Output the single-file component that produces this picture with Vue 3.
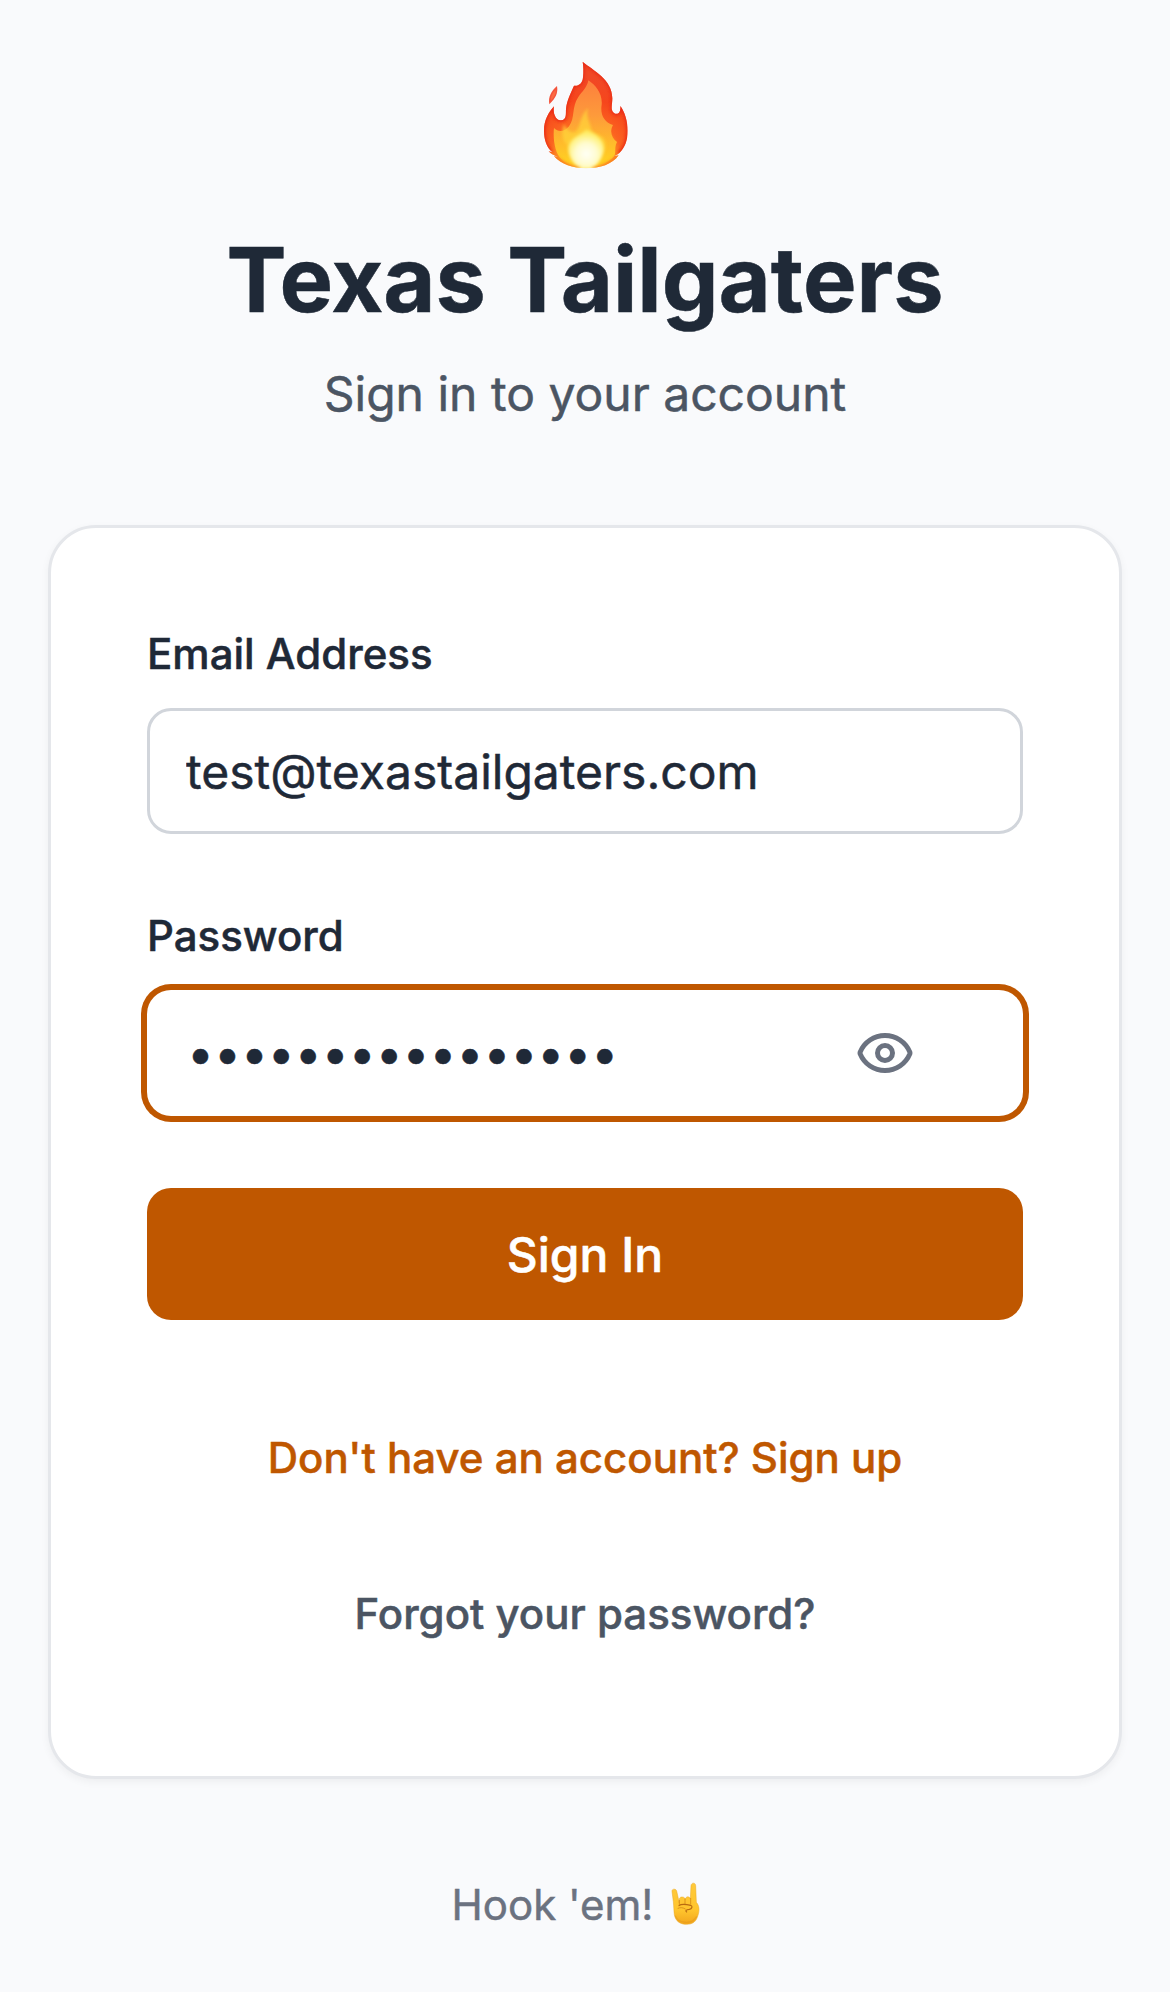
<script setup>
import { ref } from 'vue'

const email = ref('test@texastailgaters.com')
const password = ref('hookemhorns12345')
</script>

<template>
  <main class="page">
    <header class="brand">
      <svg class="flame" viewBox="0 0 360 390" aria-hidden="true">
        <defs>
          <radialGradient id="flameOuter" gradientUnits="userSpaceOnUse" cx="182" cy="320" r="240">
            <stop offset="0" stop-color="#fff06a" />
            <stop offset=".25" stop-color="#ffb829" />
            <stop offset=".45" stop-color="#fb6420" />
            <stop offset=".72" stop-color="#f6461c" />
            <stop offset="1" stop-color="#f04826" />
          </radialGradient>
          <linearGradient id="flameMid" x1="0" y1="0" x2="0" y2="1">
            <stop offset="0" stop-color="#fd7f3d" />
            <stop offset=".4" stop-color="#fd9a3b" />
            <stop offset=".7" stop-color="#ffb92c" />
            <stop offset="1" stop-color="#ffd61f" />
          </linearGradient>
          <radialGradient id="flameCore" gradientUnits="userSpaceOnUse" cx="184" cy="312" r="80">
            <stop offset="0" stop-color="#fffff6" />
            <stop offset=".4" stop-color="#fffcd0" />
            <stop offset=".75" stop-color="#ffef70" />
            <stop offset="1" stop-color="#ffdf3c" />
          </radialGradient>
          <filter id="soften" x="-20%" y="-20%" width="140%" height="140%">
            <feGaussianBlur stdDeviation="4" />
          </filter>
          <clipPath id="flameClip">
            <path d="M173 35C205 62 262 88 262 145C262 163 256 180 266 188C278 197 288 188 286 168C299 185 308 214 308 242C308 272 299 293 283 309C279 313 274 316 268 318L281 316C262 343 225 355 183 355C143 355 109 343 87 319L98 320C88 317 77 311 71 304L82 307C64 291 57 268 57 242C57 211 70 188 87 169C83 188 91 212 108 211C126 210 122 190 123 177C126 150 136 133 147 107C158 110 173 102 174 82C176 65 175 49 173 35Z" />
          </clipPath>
        </defs>
        <path d="M96 108C100 130 91 145 73 163C69 141 78 124 96 108Z" fill="#f4543c" />
        <path d="M92 120C93 132 87 142 78 151C77 139 82 129 92 120Z" fill="#fb6b43" />
        <g clip-path="url(#flameClip)">
          <rect width="360" height="390" fill="url(#flameOuter)" />
          <path d="M173 35C205 62 262 88 262 145C262 163 256 180 266 188C278 197 288 188 286 168C299 185 308 214 308 242C308 272 299 293 281 311M87 169C83 188 91 212 108 211C126 210 122 190 123 177C126 150 136 133 147 107C158 110 173 102 174 82C176 65 175 49 173 35M87 169C70 188 57 211 57 242C57 268 64 291 79 306" fill="none" stroke="#e92b13" stroke-width="9" filter="url(#soften)" />
          <path d="M190 91C213 106 233 132 230 164C225 194 238 218 264 225C252 247 262 264 276 276C264 300 280 313 258 328C227 357 142 362 109 328C91 310 83 270 87 234C99 247 119 247 132 229C151 204 139 171 160 141C172 124 187 111 190 91Z" fill="url(#flameMid)" />
          <path d="M190 174C181 199 196 217 199 239C210 257 227 250 238 268C247 287 240 307 221 332L202 355H164C142 337 126 312 128 286C111 273 108 248 117 222C127 243 143 253 154 243C168 227 163 198 190 174Z" fill="#ffd63b" opacity=".7" filter="url(#soften)" />
          <path d="M184 238C203 250 240 263 236 301C231 330 215 346 202 357H164C147 343 128 321 131 291C136 260 170 256 184 238Z" fill="url(#flameCore)" filter="url(#soften)" />
          <path d="M71 300C98 324 132 346 168 353L151 362H95ZM285 309C258 332 231 347 199 353L215 362H270Z" fill="#fb7d1c" opacity=".8" filter="url(#soften)" />
        </g>
      </svg>
      <h1 class="title">Texas Tailgaters</h1>
      <p class="subtitle">Sign in to your account</p>
    </header>

    <section class="card">
      <form class="form" @submit.prevent>
        <div class="field">
          <label class="label" for="email">Email Address</label>
          <input id="email" v-model="email" class="input" type="text" />
        </div>
        <div class="field">
          <label class="label" for="password">Password</label>
          <div class="password-box">
            <input id="password" v-model="password" class="password-input" type="password" />
            <svg class="eye" viewBox="0 0 24 24" fill="none" stroke="currentColor" stroke-width="2" stroke-linecap="round" stroke-linejoin="round">
              <path d="M2.062 12.348a1 1 0 0 1 0-.696 10.75 10.75 0 0 1 19.876 0 1 1 0 0 1 0 .696 10.75 10.75 0 0 1-19.876 0" />
              <circle cx="12" cy="12" r="3" />
            </svg>
          </div>
        </div>
        <button class="submit" type="submit">Sign In</button>
      </form>
      <nav class="links">
        <a class="link signup">Don't have an account? Sign up</a>
        <a class="link forgot">Forgot your password?</a>
      </nav>
    </section>

    <footer class="footer">
      <span>Hook 'em!</span>
      <svg class="horns" viewBox="0 0 150 180" aria-hidden="true">
        <defs>
          <linearGradient id="skin" x1="0" y1="0" x2="0" y2="1">
            <stop offset="0" stop-color="#ffc93a" />
            <stop offset=".65" stop-color="#ffc52e" />
            <stop offset="1" stop-color="#f2a51c" />
          </linearGradient>
        </defs>
        <path d="M36 49C35 41 48 40 50 48L58 84C57 72 58 66 66 66C72 66 75 69 76 73C77 63 89 63 91 72L93 32C94 22 107 22 107 32L109 82C118 92 119 106 114 121C109 139 99 148 80 148C60 148 47 139 43 119C41 107 42 94 40 80Z" fill="url(#skin)" stroke="#e9a623" stroke-width="1.5" />
        <path d="M58 76V91M75 72V87M92 70V87" fill="none" stroke="#d58a16" stroke-width="2.5" stroke-linecap="round" />
        <path d="M57 92C64 86 83 89 92 91C99 94 96 101 88 103C78 104 75 107 80 111" fill="none" stroke="#b96b11" stroke-width="3.5" stroke-linecap="round" />
        <path d="M54 100C61 96 70 98 76 102" fill="none" stroke="#dd961b" stroke-width="3" stroke-linecap="round" />
        <path d="M46 122C52 143 94 153 110 124" fill="none" stroke="#e2951b" stroke-width="4" opacity=".45" />
      </svg>
    </footer>
  </main>
</template>

<style>
body {
  background: #f9fafc;
}
</style>

<style scoped>
.page {
  box-sizing: border-box;
  min-height: 1992px;
  padding: 50px 48px 0;
  background: #f9fafc;
  color: #1f2937;
  font-family: Inter, "Liberation Sans", sans-serif;
  -webkit-text-stroke: 0.5px currentColor;
}

.brand {
  display: flex;
  flex-direction: column;
  align-items: center;
}

.flame {
  width: 120px;
  height: 130px;
}

.title {
  margin: 46px 0 24px;
  font-size: 90px;
  line-height: 108px;
  font-weight: 700;
  white-space: nowrap;
}

.subtitle {
  margin: 0;
  color: #4b5563;
  font-size: 48px;
  line-height: 72px;
}

.card {
  margin-top: 95px;
  padding: 96px;
  background: #fff;
  border: 3px solid #e5e7eb;
  border-radius: 48px;
  box-shadow: 0 3px 9px rgba(0, 0, 0, 0.05);
}

.form {
  display: flex;
  flex-direction: column;
  gap: 72px;
}

.field {
  display: flex;
  flex-direction: column;
  gap: 24px;
}

.label {
  font-size: 42px;
  line-height: 60px;
  font-weight: 500;
}

.input,
.password-box {
  box-sizing: border-box;
  width: 100%;
  height: 126px;
  padding: 0 36px;
  background: #fff;
  border: 3px solid #d1d5db;
  border-radius: 24px;
}

.input,
.password-input {
  color: #1f2937;
  font-family: inherit;
  font-size: 48px;
  outline: none;
}

.password-box {
  display: flex;
  align-items: center;
  padding-right: 105px;
  border-color: transparent;
  box-shadow: 0 0 0 6px #bf5700;
}

.password-input {
  box-sizing: border-box;
  flex: 1;
  min-width: 0;
  height: 100%;
  padding: 0 0 2px 1px;
  border: 0;
  background: transparent;
  letter-spacing: -0.05px;
}

.eye {
  width: 60px;
  height: 60px;
  color: #6b7280;
}

.submit {
  height: 132px;
  padding: 0;
  border: 0;
  border-radius: 24px;
  background: #bf5700;
  color: #fff;
  font-family: inherit;
  font-size: 48px;
  font-weight: 500;
}

.links {
  display: flex;
  flex-direction: column;
  gap: 24px;
  margin-top: 72px;
}

.link {
  padding: 36px 0;
  font-size: 42px;
  line-height: 60px;
  font-weight: 500;
  text-align: center;
}

.signup {
  color: #bf5700;
}

.forgot {
  color: #4b5563;
}

.footer {
  display: flex;
  justify-content: center;
  margin-top: 96px;
  color: #6b7280;
  font-size: 42px;
  line-height: 60px;
}

.horns {
  width: 50px;
  height: 60px;
  margin: 0 8px 0 7px;
}
</style>
